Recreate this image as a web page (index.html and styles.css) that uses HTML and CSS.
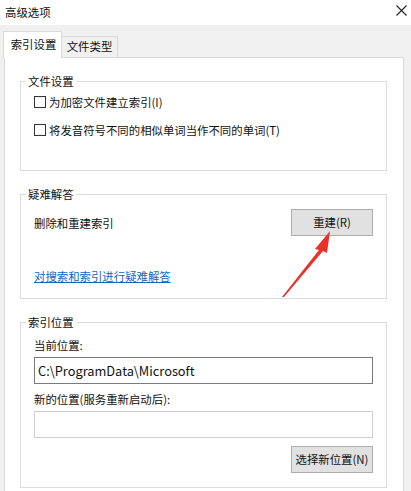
FILE: index.html
```html
<!DOCTYPE html>
<html lang="zh-CN">
<head>
<meta charset="utf-8">
<title>高级选项</title>
<link rel="stylesheet" href="styles.css">
</head>
<body>
<div class="window">
  <div class="titlebar">
    <span class="title">高级选项</span>
    <svg class="close" width="11" height="11" viewBox="0 0 11 11"><path d="M0.5 0.5 L10.5 10.5 M10.5 0.5 L0.5 10.5" stroke="#222" stroke-width="1.1" fill="none"/></svg>
  </div>
  <div class="tabs">
    <div class="tab active">索引设置</div>
    <div class="tab">文件类型</div>
  </div>
  <div class="panel">
    <fieldset class="group">
      <legend>文件设置</legend>
      <div class="group-body g1">
        <div class="check-row"><span class="checkbox"></span><span>为加密文件建立索引(I)</span></div>
        <div class="check-row second"><span class="checkbox"></span><span>将发音符号不同的相似单词当作不同的单词(T)</span></div>
      </div>
    </fieldset>
    <fieldset class="group">
      <legend>疑难解答</legend>
      <div class="group-body g2">
        <div class="action-row"><span>删除和重建索引</span><span class="button">重建(R)</span></div>
        <a class="link" href="#">对搜索和索引进行疑难解答</a>
      </div>
    </fieldset>
    <fieldset class="group">
      <legend>索引位置</legend>
      <div class="group-body g3">
        <div class="label">当前位置:</div>
        <div class="input current">C:\ProgramData\Microsoft</div>
        <div class="label second-label">新的位置(服务重新启动后):</div>
        <div class="input empty"></div>
        <div class="button-row"><span class="button">选择新位置(N)</span></div>
      </div>
    </fieldset>
  </div>
  <svg class="arrow" width="411" height="491" viewBox="0 0 411 491">
    <polygon points="282,297 319,250 315,249 330,231 327,253 323,251 284,297" fill="#e8322a"/>
  </svg>
</div>
</body>
</html>
```
FILE: styles.css
```css
html, body {
  margin: 0;
  padding: 0;
}
body {
  width: 411px;
  height: 491px;
  overflow: hidden;
  background: #f0f0f0;
  font-family: "Noto Sans CJK SC", "Microsoft YaHei", sans-serif;
  font-size: 11.4px;
  color: #111;
}
.window {
  position: relative;
  width: 411px;
  height: 491px;
  overflow: hidden;
}
.titlebar {
  height: 25px;
  background: #fff;
  display: flex;
  align-items: center;
  justify-content: space-between;
  padding: 0 4px 0 5px;
}
.title {
  line-height: 16px;
  margin-top: -2px;
}
.close {
  margin-top: -4px;
}
.tabs {
  display: flex;
  align-items: flex-end;
  padding-left: 3px;
  margin-top: 6px;
  position: relative;
  z-index: 1;
}
.tab {
  box-sizing: border-box;
  height: 21px;
  line-height: 19px;
  border: 1px solid #d9d9d9;
  border-bottom: none;
  background: #f0f0f0;
  text-align: center;
}
.tab.active {
  width: 59px;
  height: 27px;
  line-height: 25px;
  background: #fff;
  margin-bottom: -1px;
  padding-left: 2px;
}
.tab:not(.active) {
  width: 56px;
  border-left: none;
}
.panel {
  margin: 0 7px 0 4px;
  height: 460px;
  box-sizing: border-box;
  background: #fff;
  border: 1px solid #d9d9d9;
  padding: 15px 16px 0 15px;
}
.group {
  margin: 0 0 15px;
  padding: 0;
  border: 1px solid #dcdcdc;
  min-width: 0;
}
.group legend {
  margin-left: 5px;
  padding: 0 2px;
  line-height: 16px;
}
.group-body {
  padding: 7px 13px 14px;
}
.group-body.g1 {
  padding: 5px 13px 32px;
}
.check-row {
  display: flex;
  align-items: center;
  height: 16px;
  gap: 3px;
}
.check-row.second {
  margin-top: 12px;
}
.checkbox {
  width: 10px;
  height: 10px;
  border: 1px solid #333;
  background: #fff;
  flex: none;
}
.action-row {
  display: flex;
  align-items: center;
  justify-content: space-between;
}
.button {
  box-sizing: border-box;
  width: 82px;
  height: 27px;
  line-height: 25px;
  text-align: center;
  background: #e1e1e1;
  border: 1px solid #adadad;
}
.link {
  display: inline-block;
  margin-top: 32px;
  line-height: 16px;
  color: #1565c0;
  text-decoration: underline;
}
.label {
  line-height: 16px;
}
.second-label {
  margin-top: 7px;
}
.input {
  box-sizing: border-box;
  margin-top: 4px;
  height: 27px;
  line-height: 25px;
  padding-left: 3px;
  background: #fff;
  border: 1px solid #7a7a7a;
  font-size: 12.8px;
}
.input.empty {
  border-color: #cfcfcf;
}
.button-row {
  display: flex;
  justify-content: flex-end;
  margin-top: 8px;
}
.arrow {
  position: absolute;
  left: 0;
  top: 0;
  pointer-events: none;
}
```
